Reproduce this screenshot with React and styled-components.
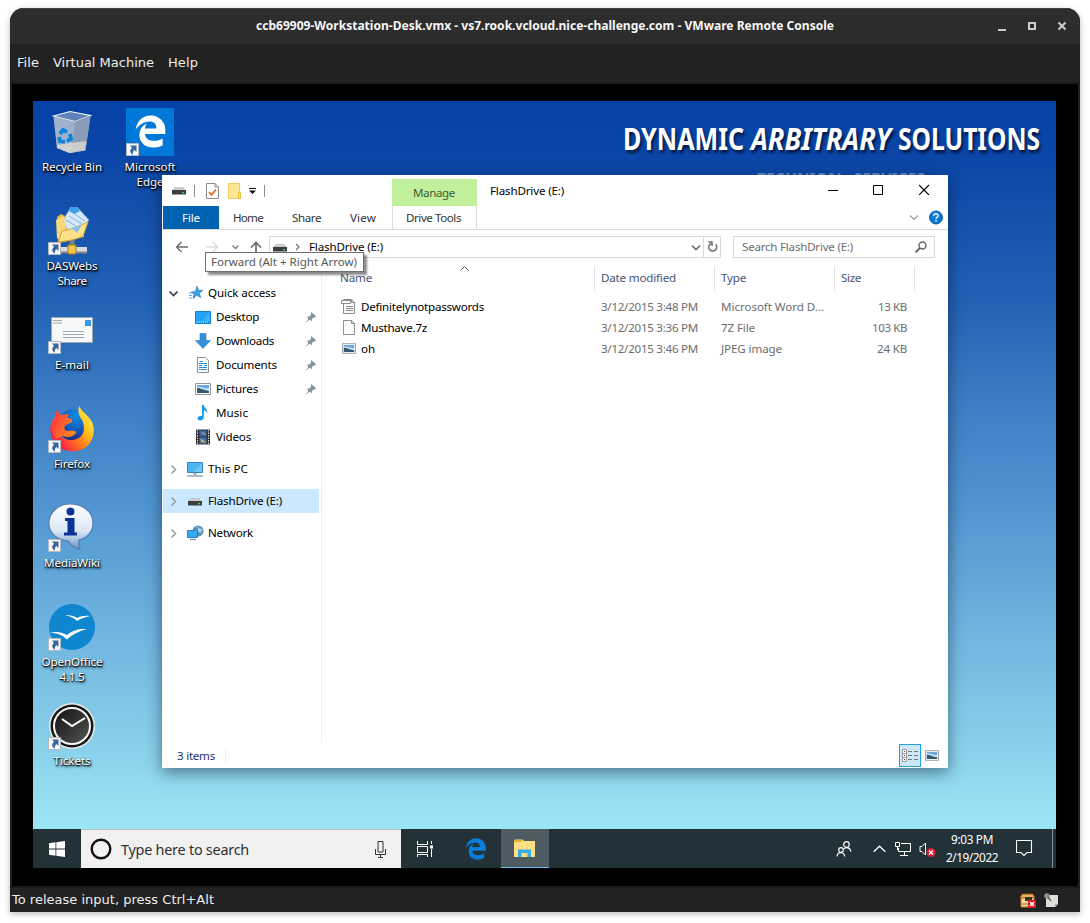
import React, { useLayoutEffect, useRef, useState } from 'react';
import styled, { createGlobalStyle, css } from 'styled-components';
import { FaEdgeLegacy } from 'react-icons/fa';

const UI = '"Noto Sans", "Open Sans", sans-serif';

const GlobalStyle = createGlobalStyle`
  * { box-sizing: border-box; }
  body { margin: 0; background: #fff; font-family: ${UI}; overflow: hidden; }
  svg { display: block; flex: none; }
`;

/* ---------- text that keeps an exact advance width ---------- */

const FitBox = styled.span`
  display: inline-block;
  flex: none;
  white-space: pre;
  text-align: left;
`;
const FitInner = styled.span`
  display: inline-block;
  transform-origin: 0 50%;
`;

function Fit({ w, squeeze, children }) {
  const ref = useRef(null);
  const [natural, setNatural] = useState(0);
  useLayoutEffect(() => {
    setNatural(ref.current.offsetWidth ? ref.current.getBoundingClientRect().width : 0);
  }, []);
  const length = ref.current ? ref.current.textContent.length : 1;
  let style;
  if (natural) {
    style = squeeze
      ? { transform: `scaleX(${w / natural})` }
      : { letterSpacing: `${(w - natural) / length}px` };
  }
  return (
    <FitBox style={{ width: w }}>
      <FitInner ref={ref} style={style}>{children}</FitInner>
    </FitBox>
  );
}

/* ---------- console window ---------- */

const Page = styled.div`
  width: 1090px;
  height: 923px;
  padding: 8px 10px 11px;
  background: #fff;
`;
const Console = styled.div`
  width: 1070px;
  height: 904px;
  display: flex;
  flex-direction: column;
  background: #222;
  border-radius: 14px 14px 0 0;
  overflow: hidden;
  box-shadow: 0 2px 6px rgba(0, 0, 0, 0.28);
`;
const TitleBar = styled.div`
  height: 36px;
  flex: none;
  display: grid;
  grid-template-columns: 1fr auto 1fr;
  align-items: center;
  background: #2d2d2d;
  border-top: 1px solid #424242;
  color: #f6f6f6;
  font: 700 13px/20px ${UI};
`;
const TitleText = styled.div`
  grid-column: 2;
  height: 24px;
`;
const TitleButtons = styled.div`
  display: flex;
  justify-content: flex-end;
  align-items: center;
  gap: 18px;
  padding: 0 12px 1px 0;
`;
const MenuBar = styled.div`
  height: 40px;
  flex: none;
  display: flex;
  gap: 14px;
  padding: 9px 7px 0;
  border-bottom: 2px solid #1b1b1b;
  color: #eee;
  font: 13px/19px "DejaVu Sans", sans-serif;
`;
const Screen = styled.div`
  height: 802px;
  flex: none;
  margin: 0 2px;
  padding: 17px 22px 18px 21px;
  background: #000;
`;
const StatusBar = styled.div`
  flex: 1;
  display: flex;
  align-items: center;
  padding: 0 21px 0 2px;
  border-top: 2px solid #1a1a1a;
  color: #eee;
  font: 13px/18px "DejaVu Sans", sans-serif;
`;
const StatusIcons = styled.div`
  display: flex;
  gap: 8px;
  margin-left: auto;
`;

/* ---------- desktop ---------- */

const Desktop = styled.div`
  position: relative;
  width: 1023px;
  height: 767px;
  display: flex;
  flex-direction: column;
  overflow: hidden;
  background: linear-gradient(180deg, #0541a6 0, #0b47a8 60px, #2162b5 200px, #3c7dc4 300px, #4f94d0 400px, #6db2de 520px, #88cfea 640px, #9be6f5 728px);
`;
const Wallpaper = styled.div`
  position: absolute;
  top: 18px;
  right: 16px;
  display: flex;
  flex-direction: column;
  align-items: flex-end;
  color: #fff;
`;
const Brand = styled.div`
  height: 40px;
  display: flex;
  gap: 7px;
  font: 700 29.5px/40px ${UI};
  text-shadow: 2px 3px 3px rgba(0, 10, 40, 0.75);
`;
const Tagline = styled.div`
  margin: 8px 115px 0 0;
  height: 22px;
  font: 700 15px/20px ${UI};
  color: #6d8fca;
`;
const IconField = styled.div`
  flex: 1;
  display: grid;
  grid-template-columns: 78px 78px;
  grid-template-rows: repeat(7, 99px);
  grid-auto-flow: column;
  padding-top: 7px;
  align-content: start;
`;
const Shortcut = styled.div`
  display: flex;
  flex-direction: column;
  align-items: center;
`;
const IconSlot = styled.div`
  position: relative;
  width: 48px;
  height: 48px;
  margin-bottom: 3px;
`;
const Badge = styled.svg`
  position: absolute;
  left: 0;
  bottom: 0;
`;
const ShortcutLabel = styled.div`
  height: 15px;
  color: #fff;
  font: 11.6px/15px ${UI};
  text-shadow: 1px 1px 2px #000, 0 1px 1px rgba(0, 0, 0, 0.8), 1px 2px 3px rgba(0, 0, 0, 0.6);
`;

/* ---------- explorer ---------- */

const Explorer = styled.div`
  position: absolute;
  left: 129px;
  top: 74px;
  width: 786px;
  height: 593px;
  display: flex;
  flex-direction: column;
  background: #fff;
  box-shadow: 0 4px 15px rgba(0, 15, 40, 0.5);
  color: #000;
  font: 11.6px/16px ${UI};
`;
const CaptionBar = styled.div`
  height: 31px;
  flex: none;
  display: flex;
`;
const QuickTools = styled.div`
  width: 230px;
  display: flex;
  align-items: center;
  gap: 8px;
  padding: 0 0 0 10px;
`;
const Bar = styled.span`
  width: 1px;
  height: 12px;
  margin-right: ${p => p.$after || 0}px;
  background: #8d8d8d;
`;
const ContextTab = styled.div`
  width: 85px;
  height: 27px;
  margin-top: 4px;
  padding-right: 1px;
  display: flex;
  align-items: center;
  justify-content: center;
  background: #c1f09c;
  color: #3f5a33;
`;
const CaptionTitle = styled.div`
  padding: 8px 0 0 13px;
`;
const CaptionButtons = styled.div`
  display: flex;
  gap: 35px;
  margin-left: auto;
  padding: 9px 18px 0 0;
`;
const Ribbon = styled.div`
  height: 24px;
  flex: none;
  display: flex;
  padding: 0 5px 0 1px;
  border-bottom: 1px solid #dadada;
`;
const RibbonTab = styled.div`
  width: ${p => p.$w}px;
  height: 23px;
  display: flex;
  align-items: center;
  justify-content: center;
  color: #333;
  ${p => p.$file && css`
    background: #0063b1;
    color: #fff;
  `}
  ${p => p.$context && css`
    margin-left: 2px;
    padding-right: 2px;
    border: solid #dedede;
    border-width: 0 1px;
  `}
`;
const RibbonEnd = styled.div`
  display: flex;
  align-items: center;
  gap: 10px;
  margin-left: auto;
`;
const AddressRow = styled.div`
  height: 36px;
  flex: none;
  display: flex;
  align-items: center;
  padding: 0 13px 2px 14px;
`;
const NavButtons = styled.div`
  width: 93px;
  display: flex;
  align-items: center;
`;
const NavSlot = styled.span`
  width: ${p => p.$w}px;
`;
const Field = styled.div`
  width: ${p => p.$w}px;
  height: 22px;
  display: flex;
  align-items: center;
  border: 1px solid #d9d9d9;
`;
const AddressField = styled(Field)`
  padding-left: 3px;
  gap: 8px;
`;
const RefreshSlot = styled.div`
  width: 17px;
  height: 20px;
  margin-left: -6px;
  padding: 4px 0 0 3px;
  border-left: 1px solid #d9d9d9;
`;
const SearchField = styled(Field)`
  margin-left: 12px;
  padding: 0 7px 0 8px;
  justify-content: space-between;
  color: #6d6d6d;
`;
const Push = styled.span`
  flex: 1;
`;
const Body = styled.div`
  flex: 1;
  display: flex;
`;
const Tree = styled.div`
  width: 160px;
  padding: 15px 2px 0 1px;
  border-right: 1px solid #f0f0f0;
`;
const TreeRow = styled.div`
  height: 24px;
  margin-bottom: ${p => (p.$gap ? 8 : 0)}px;
  display: flex;
  align-items: center;
  padding: 0 3px 0 ${p => (p.$child ? 32 : 6)}px;
  gap: ${p => (p.$child ? 5 : 0)}px;
  background: ${p => (p.$selected ? '#cce8ff' : 'transparent')};
`;
const TreeIcon = styled.span`
  width: ${p => (p.$child ? 16 : 29)}px;
  padding-left: ${p => (p.$child ? 0 : p.$inset)}px;
  margin-right: ${p => (p.$child ? 0 : 1)}px;
`;
const Chevron = styled.span`
  width: 9px;
`;
const List = styled.div`
  flex: 1;
`;
const HeaderRow = styled.div`
  height: 25px;
  display: flex;
  padding-left: 12px;
  color: #44547c;
`;
const HeaderCell = styled.div`
  position: relative;
  width: ${p => p.$w}px;
  padding: 4px 0 0 6px;
  border-right: 1px solid #e4e4e4;
`;
const SortMark = styled.svg`
  position: absolute;
  top: 0;
  right: 125px;
`;
const Files = styled.div`
  padding-top: 5px;
`;
const FileRow = styled.div`
  height: 21px;
  display: grid;
  grid-template-columns: 39px 240px 120px 126px 60px;
  align-items: center;
  color: #6d6d6d;
`;
const FileIcon = styled.span`
  padding: 0 0 1px ${p => p.$inset}px;
`;
const FileName = styled.span`
  color: #000;
`;
const SizeCell = styled.span`
  text-align: right;
`;
const ExplorerStatus = styled.div`
  height: 25px;
  flex: none;
  display: flex;
  align-items: center;
  padding: 1px 5px 0 15px;
  color: #1e3270;
`;
const StatusRule = styled.span`
  width: 1px;
  height: 12px;
  margin-left: 10px;
  background: #ececec;
`;
const ViewButton = styled.div`
  width: 22px;
  height: 23px;
  margin-bottom: 2px;
  display: flex;
  align-items: center;
  justify-content: center;
  background: ${p => (p.$active ? '#cce8f6' : 'transparent')};
  border: ${p => (p.$active ? '1px solid #26a0da' : 0)};
`;
const Tooltip = styled.div`
  position: absolute;
  left: 43px;
  top: 77px;
  width: 159px;
  height: 20px;
  padding: 1px 0 0 5px;
  border: 1px solid #6f6f6f;
  background: #fff;
  color: #575757;
  box-shadow: 3px 3px 2px rgba(0, 0, 0, 0.45);
`;

/* ---------- taskbar ---------- */

const Taskbar = styled.div`
  height: 39px;
  flex: none;
  display: flex;
  background: #223238;
  color: #fff;
`;
const TaskButton = styled.div`
  width: ${p => p.$w || 48}px;
  height: 39px;
  padding: ${p => p.$drop || 0}px 0 0 ${p => p.$nudge || 0}px;
  display: flex;
  align-items: center;
  justify-content: center;
  background: ${p => (p.$active ? '#4e5b60' : 'transparent')};
  border-bottom: ${p => (p.$active ? '1px solid #76b9ed' : 0)};
`;
const TaskSearch = styled.div`
  width: 320px;
  display: flex;
  align-items: center;
  padding: 0 14px 0 9px;
  border-top: 1px solid #bcbcc2;
  background: #f1f1f1;
  color: #303030;
  font: 14.4px/22px ${UI};
`;
const SearchHint = styled.span`
  margin: 2px auto 0 9px;
`;
const Tray = styled.div`
  display: flex;
  align-items: center;
  margin-left: auto;
`;
const Clock = styled.div`
  width: 54px;
  height: 37px;
  text-align: center;
  font: 11.8px/18px ${UI};
`;
const ShowDesktop = styled.div`
  width: 4px;
  height: 39px;
  border-left: 1px solid #859196;
`;

/* ---------- icons ---------- */

const ShortcutBadge = () => (
  <Badge width="13" height="13" viewBox="0 0 13 13">
    <path d="M.5.5h12v12H.5z" fill="#f6f7f8" stroke="#b4b9be" />
    <path d="M4 2.500h6.500V9L8.400 7C7 8.300 6.600 9.500 7 11.500 3.700 9.800 3.300 7.300 6 4.700z" fill="#3a669e" />
  </Badge>
);

const RecycleIcon = () => (
  <svg width="48" height="48" viewBox="0 0 48 48">
    <path d="M5.500 8 22 3.500 42.500 7.500l-5 35L21 45 9 40z" fill="#aab9d0" opacity=".9" />
    <path d="M5.500 8 22 3.500 42.500 7.500 27 13.500z" fill="#5d82b8" stroke="#edf1f6" strokeWidth="1.200" />
    <path d="m27 13.500 15.500-6-5 35L22 45z" fill="#8b9cb9" />
    <path d="m5.500 8 21.500 5.500L23 45 9 40z" fill="#a3b2ca" opacity=".7" />
    <path d="m9 37 14-2 15-2-1 9-15 3-13-5z" fill="#dcd9d2" opacity=".8" />
    <g fill="none" stroke="#0a84d8" strokeWidth="3.800">
      <path d="m12 26 3-4 4 2M22 26l1 5-4 2M17 34l-5-1-1-4" />
    </g>
  </svg>
);

const EdgeTile = styled.div`
  width: 48px;
  height: 48px;
  padding: 7px 0 0 8px;
  background: #0078d7;
  color: #fff;
`;

const ShareIcon = () => (
  <svg width="48" height="48" viewBox="0 0 48 48">
    <path d="M24 28v12" stroke="#7b8084" strokeWidth="5" />
    <path d="M8 43h31" stroke="#d9dcdd" strokeWidth="6" /><path d="M8 45.500h31" stroke="#81868a" strokeWidth="2" />
    <path d="M20 38h8v9h-8z" fill="#f0c64b" stroke="#a8801c" />
    <path d="M9 10l4-3 4 2 19 7v14l-24 6z" fill="#e9b93e" />
    <path d="M14 15 23 0h6l12 13-14 19z" fill="#d6e9f9" stroke="#78a9d8" strokeWidth=".8" />
    <path d="M23 0h6l3 4-6 3-5-3z" fill="#3fa0e8" />
    <path d="m18 13 13 8m-10-12 13 8M25 6l12 8" stroke="#7fb2e0" strokeWidth="1" />
    <path d="m8 13 8-4 2 15-6 10-3-3z" fill="#f6d878" />
    <path d="m10 35 4-11c8-1 17-5 26-9l-5 14c-8 4-17 5-25 6z" fill="#fbe18a" stroke="#d8a537" />
    <path d="m23 21 11-3-5 8z" fill="#8fc0e8" />
  </svg>
);

const MailIcon = () => (
  <svg width="48" height="48" viewBox="0 0 48 48">
    <path d="M3.500 11.500h41v25h-41z" fill="#f7f8f9" stroke="#a4a7aa" />
    <path d="M37 14h6v6h-6z" fill="#3a97e8" />
    <path d="M5 14.500h9M5 17h9M15 25.500h21M15 28.500h21M15 31.500h21" stroke="#a3a7ac" />
  </svg>
);

const FirefoxIcon = () => (
  <svg width="48" height="48" viewBox="0 0 48 48">
    <defs>
      <linearGradient id="ffBody" x1=".9" y1=".1" x2=".1" y2=".7">
        <stop offset="0" stopColor="#fff04a" /><stop offset=".3" stopColor="#ffc31e" />
        <stop offset=".6" stopColor="#ff7a1c" /><stop offset="1" stopColor="#fb1f45" />
      </linearGradient>
      <linearGradient id="ffHead" x1="0" y1="0" x2="1" y2=".6">
        <stop offset="0" stopColor="#ff2c45" /><stop offset="1" stopColor="#ff8a1c" />
      </linearGradient>
      <radialGradient id="ffGlobe" cx=".6" cy=".2" r=".8">
        <stop offset="0" stopColor="#0d8ee6" /><stop offset=".6" stopColor="#1459ba" /><stop offset="1" stopColor="#222a80" />
      </radialGradient>
    </defs>
    <circle cx="25" cy="20" r="15.500" fill="url(#ffGlobe)" />
    <path d="M31.500 1c1 5 9 9 12.500 16 4 9 1 19-6 25-9 7-23 5-30-3C0 31 1 18 7 12l1-6 5 5-2 18c5 8 18 8 23 1 3-5 2-10 0-15-3-4-5-9-2.500-14z" fill="url(#ffBody)" />
    <path d="M7 12l1-7 5 5c3-1 6-1 8-1l-2 4c4 0 6 1 5 4l-6 3c-2 1-2 3-1 5 3 2 5 0 9 1 2 0 3 2 1 3-3 3-7 4-12 2l-8 3C3 27 3 18 7 12z" fill="url(#ffHead)" />
  </svg>
);

const WikiIcon = () => (
  <svg width="48" height="48" viewBox="0 0 48 48">
    <defs>
      <linearGradient id="bubble" x1="0" y1="0" x2="0" y2="1">
        <stop offset="0" stopColor="#fff" /><stop offset=".6" stopColor="#dce8f7" /><stop offset="1" stopColor="#6f94c6" />
      </linearGradient>
    </defs>
    <path d="M22 0c13 0 23 8 23 19 0 9-6 15-14 17-1 4 0 6 1 9-5-1-9-4-12-8C9 36 .800 29 .800 19S10 0 22 0z" fill="url(#bubble)" stroke="#5579ae" strokeWidth="1.200" />
    <path d="M17 14h9.500v14.500h2.500v3H16v-3h3.500V17H17z" fill="#0a3594" /><circle cx="22.500" cy="7.500" r="4" fill="#0a3594" />
  </svg>
);

const OfficeIcon = () => (
  <svg width="48" height="48" viewBox="0 0 48 48">
    <circle cx="24" cy="24" r="23" fill="#0f86cf" />
    <path d="M17 12.500c5-.8 9 .4 12 2.500 4-2 8-2.500 13-2-5 1.200-9 2.500-13 5-3-3-6-4.600-12-5.500zM2 30c6-2 12-.500 17 2 6-5 12-6.500 20-6-8 2-15 5.500-20 10.500-5-4.500-9-6.500-17-6.500z" fill="#fff" />
  </svg>
);

const TicketIcon = () => (
  <svg width="48" height="48" viewBox="0 0 48 48">
    <defs>
      <linearGradient id="dial" x1="0" y1="0" x2="1" y2="1"><stop offset="0" stopColor="#111" /><stop offset="1" stopColor="#555" /></linearGradient>
    </defs>
    <circle cx="24" cy="24" r="23" fill="#e9e9e9" /><circle cx="24" cy="24" r="21.500" fill="#171717" />
    <circle cx="24" cy="24" r="18" fill="url(#dial)" stroke="#f7f7f7" strokeWidth="2" />
    <path d="m14 17 10 7 13-8" fill="none" stroke="#fff" strokeWidth="2" />
  </svg>
);

const DriveIcon = ({ w = 14 }) => (
  <svg width={w} height="9" viewBox="0 0 14 9">
    <path d="M2.500 1h9L14 4.500H0z" fill="#c9cccd" /><path d="M0 4h14v4.500H0z" fill="#3c3f41" />
    <path d="M10 6h2v1.200h-2z" fill="#36e34b" />
  </svg>
);

const PictureIcon = ({ w = 16, h = 12 }) => (
  <svg width={w} height={h} viewBox="0 0 16 12">
    <path d="M.5.5h15v11H.5z" fill="#fff" stroke="#8f959a" />
    <path d="M2 2h12v8H2z" fill="#cfe5f7" /><path d="M2 2h12v3c-4 2-7-2-12-1z" fill="#6ba7dc" />
    <path d="M2 5c4 0 6 2 12 3v2H2z" fill="#35596e" />
  </svg>
);

const PageIcon = ({ word }) => (
  <svg width="16" height="17" viewBox="0 0 16 17">
    <path d="M2.500 1.500h8l3 3v11h-11z" fill="#fbfbfb" stroke="#8e8e8e" />
    <path d="M10.500 1.500v3h3" fill="none" stroke="#8e8e8e" />
    {word && (
      <>
        <path d="M.5 2.500h9v3h-9z" fill="#fff" stroke="#8e8e8e" />
        <path d="M5 8.500h7M5 10.500h7M5 12.500h7" stroke="#8e8e8e" />
      </>
    )}
  </svg>
);

const treeIcons = {
  star: (
    <svg width="14" height="14" viewBox="0 0 14 14">
      <path d="m8 0 1.500 4.200 4.500.1-3.500 2.800 1.200 4.700-3.800-2.500L4 12.500l1-4.300-2.800-2.300 4.100-.4z" fill="#3ba0e6" stroke="#2679bd" strokeWidth=".6" />
      <path d="M0 7h3M0 9.500h3M0 12h3" stroke="#4baaf0" />
    </svg>
  ),
  desktop: (
    <svg width="16" height="13" viewBox="0 0 16 13">
      <path d="M.5.5h15v12H.5z" fill="#20a3fb" stroke="#1580d4" /><path d="M2 11h12" stroke="#d5effd" strokeDasharray="1 1" /><path d="M15 1v9L6 11z" fill="#5bbcfc" opacity=".5" />
    </svg>
  ),
  downloads: (
    <svg width="16" height="16" viewBox="0 0 16 16"><path d="M5 .5h6v7h4.500L8 15.500.500 7.500H5z" fill="#368fdb" stroke="#2b7cc4" strokeWidth=".6" /></svg>
  ),
  documents: (
    <svg width="16" height="16" viewBox="0 0 16 16">
      <path d="M2.500.5h8l3 3v12h-11z" fill="#fff" stroke="#8b9298" /><path d="M4 6.500h8M4 8.500h3m2 0h3M4 10.500h8M4 12.500h8M5 4.500h3" fill="none" stroke="#2b8bd0" />
    </svg>
  ),
  pictures: <PictureIcon />,
  music: (
    <svg width="16" height="16" viewBox="0 0 16 16">
      <path d="M7 0h1.800c.2 3 4.200 3.800 3.500 8.500-.6-2-1.500-3-3.500-3.300V12c0 2-1.400 3.500-3.500 3.500S2.500 14.500 2.500 13 4.500 10.600 7 11z" fill="#169be9" />
    </svg>
  ),
  videos: (
    <svg width="16" height="16" viewBox="0 0 16 16">
      <path d="M1 .5h14v15H1z" fill="#333" /><path d="M2.500 1v14M13.500 1v14" stroke="#eee" strokeDasharray="1.300 1.200" />
      <path d="M4.500 1.500h7v6h-7z" fill="#3566b0" /><path d="M4.500 8.500h7v6h-7z" fill="#4278bb" />
      <path d="m6 3 3 1 2 2-3-1zM5 10l3 1 3 3-4-1z" fill="#efb72f" />
    </svg>
  ),
  pc: (
    <svg width="17" height="15" viewBox="0 0 17 15">
      <path d="M.5.5h15v10H.5z" fill="#4bb7f1" stroke="#3587b9" /><path d="M15 1v9L6 10z" fill="#8bd2f7" opacity=".6" /><path d="M6 12h4M0 14h16" stroke="#93a9bb" strokeWidth="1.300" />
    </svg>
  ),
  drive: <DriveIcon />,
  network: (
    <svg width="17" height="16" viewBox="0 0 17 16">
      <circle cx="11" cy="6" r="5.500" fill="#5b91b9" /><path d="M8 2c4-1 4 2 2 4l4 2 1-4" fill="#a8d5e8" />
      <path d="M.5 5.500h10v7H.5z" fill="#33aaf1" stroke="#2980ba" /><path d="M3 14.500h6" stroke="#58809c" />
    </svg>
  ),
};

const PinIcon = () => (
  <svg width="11" height="11" viewBox="0 0 11 11">
    <path d="m6 0 5 4-1 1.500L8.500 5.500 7 7 6.500 9.500 4.500 7.500.5 11 3.500 6.500 1.500 5l3-.5L6 2.500z" fill="#86939c" />
  </svg>
);

const TreeChevron = ({ open }) => (
  <svg width="9" height="9" viewBox="0 0 9 9" fill="none" stroke={open ? '#404040' : '#a0a0a0'} strokeWidth="1.600">
    {open ? <path d="m.5 2.500 4 4 4-4" /> : <path d="m2.500.5 4 4-4 4" />}
  </svg>
);

const Line = ({ w, h, d, color, sw = 1 }) => (
  <svg width={w} height={h} viewBox={`0 0 ${w} ${h}`} fill="none" stroke={color} strokeWidth={sw}><path d={d} /></svg>
);

/* ---------- data ---------- */

const shortcuts = [
  { icon: <RecycleIcon />, lines: [['Recycle Bin', 60]], plain: true },
  { icon: <ShareIcon />, lines: [['DASWebs', 51], ['Share', 29]] },
  { icon: <MailIcon />, lines: [['E-mail', 34]] },
  { icon: <FirefoxIcon />, lines: [['Firefox', 36]] },
  { icon: <WikiIcon />, lines: [['MediaWiki', 56]] },
  { icon: <OfficeIcon />, lines: [['OpenOffice', 61], ['4.1.5', 25]] },
  { icon: <TicketIcon />, lines: [['Tickets', 37]] },
  { icon: <EdgeTile><FaEdgeLegacy size={33} /></EdgeTile>, lines: [['Microsoft', 51], ['Edge', 27]] },
];

const tree = [
  { icon: 'star', inset: 11, text: 'Quick access', w: 68, open: true },
  { icon: 'desktop', text: 'Desktop', w: 43, child: true, pin: true },
  { icon: 'downloads', text: 'Downloads', w: 58, child: true, pin: true },
  { icon: 'documents', text: 'Documents', w: 61, child: true, pin: true },
  { icon: 'pictures', text: 'Pictures', w: 42, child: true, pin: true },
  { icon: 'music', text: 'Music', w: 32, child: true },
  { icon: 'videos', text: 'Videos', w: 35, child: true, gap: true },
  { icon: 'pc', inset: 9, text: 'This PC', w: 40, gap: true },
  { icon: 'drive', inset: 10, text: 'FlashDrive (E:)', w: 74, gap: true, selected: true },
  { icon: 'network', inset: 9, text: 'Network', w: 45 },
];

const files = [
  { icon: <PageIcon word />, inset: 19, name: ['Definitelynotpasswords', 123], date: '3/12/2015 3:48 PM', type: ['Microsoft Word D...', 103], size: ['13 KB', 29] },
  { icon: <PageIcon />, inset: 19, name: ['Musthave.7z', 66], date: '3/12/2015 3:36 PM', type: ['7Z File', 34], size: ['103 KB', 35] },
  { icon: <PictureIcon w={14} h={11} />, inset: 20, name: ['oh', 14], date: '3/12/2015 3:46 PM', type: ['JPEG image', 61], size: ['24 KB', 30] },
];

/* ---------- sections ---------- */

function ExplorerWindow() {
  return (
    <Explorer>
      <CaptionBar>
        <QuickTools>
          <DriveIcon />
          <Bar $after={3} />
          <svg width="13" height="16" viewBox="0 0 13 16">
            <path d="M.5.5h8.500l3.500 3.500v11.500H.5z" fill="#fff" stroke="#8a8a8a" /><path d="M9 .5V4h3.500" fill="none" stroke="#8a8a8a" />
            <path d="m3 9 2.500 3L10 6.500" fill="none" stroke="#e8601c" strokeWidth="1.700" />
          </svg>
          <svg width="14" height="16" viewBox="-1 0 14 16">
            <path d="M.5.5h11v15H.5z" fill="#ffe694" stroke="#f0cd5b" /><path d="M10.500 9.500h2v6h-2z" fill="#ffe694" stroke="#e8bd3c" />
          </svg>
          <svg width="7" height="6" viewBox="0 0 7 6"><path d="M0 0h7v1H0zM0 2.500h7L3.500 6z" fill="#111" /></svg>
          <Bar />
        </QuickTools>
        <ContextTab><Fit w={42}>Manage</Fit></ContextTab>
        <CaptionTitle><Fit w={74}>FlashDrive (E:)</Fit></CaptionTitle>
        <CaptionButtons>
          <Line w={11} h={11} d="M1 6.500h10" color="#000" />
          <Line w={11} h={11} d="M.5 1.500h9v9h-9z" color="#000" sw={1} />
          <Line w={11} h={11} d="m0 1 10 10m0-10L0 11" color="#000" sw={1.100} />
        </CaptionButtons>
      </CaptionBar>
      <Ribbon>
        <RibbonTab $w={56} $file><Fit w={18}>File</Fit></RibbonTab>
        <RibbonTab $w={58}><Fit w={30}>Home</Fit></RibbonTab>
        <RibbonTab $w={59}><Fit w={29}>Share</Fit></RibbonTab>
        <RibbonTab $w={54}><Fit w={26}>View</Fit></RibbonTab>
        <RibbonTab $w={85} $context><Fit w={55}>Drive Tools</Fit></RibbonTab>
        <RibbonEnd>
          <Line w={10} h={6} d="m2 .5 4 4 4-4" color="#999" sw={1.200} />
          <svg width="15" height="15" viewBox="0 0 15 15">
            <circle cx="8" cy="7.500" r="6.500" fill="#0a78d6" stroke="#075a9f" />
            <path d="M5.700 5.700C5.800 3 10.300 3.100 10.200 5.700 10.100 7.200 8 7.100 8 9m0 1v1.500" fill="none" stroke="#fff" strokeWidth="1.400" />
          </svg>
        </RibbonEnd>
      </Ribbon>
      <AddressRow>
        <NavButtons>
          <NavSlot $w={29}><Line w={13} h={12} d="M12 6H.5M5.500 1l-5 5 5 5" color="#6c6c6c" sw={1.500} /></NavSlot>
          <NavSlot $w={27}><Line w={13} h={12} d="M1 6h11.500M7.500 1l5 5-5 5" color="#dcdcdc" sw={1.500} /></NavSlot>
          <NavSlot $w={18}><Line w={7} h={5} d="m.5.5 3 3 3-3" color="#858585" sw={1.400} /></NavSlot>
          <NavSlot $w={15}><Line w={12} h={12} d="M6 12V1.500M1 6.500l5-5 5 5" color="#6c6c6c" sw={1.700} /></NavSlot>
        </NavButtons>
        <AddressField $w={452}>
          <DriveIcon />
          <Line w={6} h={8} d="m1 1 3 3-3 3" color="#777" sw={1.300} />
          <Fit w={74}>FlashDrive (E:)</Fit>
          <Push />
          <Line w={10} h={7} d="m1 1.500 4 4 4-4" color="#707070" sw={1.700} />
          <RefreshSlot><Line w={11} h={12} d="M8.500 3.200a4 4 0 1 1-4.500-.7M1.500 1h3.500v4" color="#707070" sw={1.500} /></RefreshSlot>
        </AddressField>
        <SearchField $w={202}>
          <Fit w={111}>Search FlashDrive (E:)</Fit>
          <svg width="12" height="12" viewBox="0 0 12 12" fill="none" stroke="#6b6b6b" strokeWidth="1.500"><circle cx="7.500" cy="4.500" r="3.500" /><path d="M5 7 .5 11.500" strokeWidth="2" /></svg>
        </SearchField>
      </AddressRow>
      <Body>
        <Tree>
          {tree.map(row => (
            <TreeRow key={row.text} $child={row.child} $gap={row.gap} $selected={row.selected}>
              {!row.child && <Chevron><TreeChevron open={row.open} /></Chevron>}
              <TreeIcon $child={row.child} $inset={row.inset}>{treeIcons[row.icon]}</TreeIcon>
              <Fit w={row.w}>{row.text}</Fit>
              {row.pin && <><Push /><PinIcon /></>}
            </TreeRow>
          ))}
        </Tree>
        <List>
          <HeaderRow>
            <HeaderCell $w={261}>
              <Fit w={32}>Name</Fit>
              <SortMark width="9" height="5" viewBox="0 0 9 5" fill="none" stroke="#555"><path d="m.5 4.500 4-4 4 4" /></SortMark>
            </HeaderCell>
            <HeaderCell $w={120}><Fit w={75}>Date modified</Fit></HeaderCell>
            <HeaderCell $w={120}><Fit w={25}>Type</Fit></HeaderCell>
            <HeaderCell $w={80}><Fit w={20}>Size</Fit></HeaderCell>
          </HeaderRow>
          <Files>
            {files.map(f => (
              <FileRow key={f.name[0]}>
                <FileIcon $inset={f.inset}>{f.icon}</FileIcon>
                <FileName><Fit w={f.name[1]}>{f.name[0]}</Fit></FileName>
                <Fit w={97}>{f.date}</Fit>
                <Fit w={f.type[1]}>{f.type[0]}</Fit>
                <SizeCell><Fit w={f.size[1]}>{f.size[0]}</Fit></SizeCell>
              </FileRow>
            ))}
          </Files>
        </List>
      </Body>
      <ExplorerStatus>
        <Fit w={38}>3 items</Fit>
        <StatusRule />
        <Push />
        <ViewButton $active>
          <svg width="16" height="13" viewBox="0 0 16 13">
            <path d="M.5.5h4v12h-4zM.5 4.500h4M.5 8.500h4" fill="#fff" stroke="#999" /><path d="M2 2.500h1M2 6.500h1M2 10.500h1" stroke="#333" />
            <path d="M6 2.500h4m2 0h4M6 6.500h4m2 0h4M6 10.500h4m2 0h4" stroke="#777" />
          </svg>
        </ViewButton>
        <ViewButton><PictureIcon w={14} h={11} /></ViewButton>
      </ExplorerStatus>
      <Tooltip><Fit w={146}>Forward (Alt + Right Arrow)</Fit></Tooltip>
    </Explorer>
  );
}

function TaskbarStrip() {
  return (
    <Taskbar>
      <TaskButton>
        <svg width="16" height="16" viewBox="0 0 16 16" fill="#fff"><path d="M0 2.200 6.500 1.300v6.200H0zM7.300 1.200 16 0v7.500H7.300zM0 8.500h6.500v6.200L0 13.800zM7.300 8.500H16V16l-8.700-1.200z" /></svg>
      </TaskButton>
      <TaskSearch>
        <svg width="22" height="22" viewBox="0 0 22 22"><circle cx="11" cy="11" r="9.300" fill="none" stroke="#111" strokeWidth="2.400" /></svg>
        <SearchHint><Fit w={128}>Type here to search</Fit></SearchHint>
        <Line w={13} h={17} d="M4 .5h5v10.500H4zM1.500 8v5.500h10V8M6.500 13.500V16M4 16.500h5" color="#333" />
      </TaskSearch>
      <TaskButton $w={47}>
        <svg width="17" height="16" viewBox="0 0 17 16" fill="none" stroke="#fff"><path d="M1.500 0v3.500h10V0M1.500 5.500h10v6h-10zM1.500 16v-2.500h10V16M15.500 0v3M15.500 8v8" /><path d="M14 4.500h3v3h-3z" fill="#fff" stroke="none" /></svg>
      </TaskButton>
      <TaskButton $w={53} $nudge={2}><FaEdgeLegacy size={22} color="#0a7ddb" /></TaskButton>
      <TaskButton $active>
        <svg width="22" height="19" viewBox="0 0 22 19">
          <path d="M0 1.500 1 .5h7l2 1.500h11V18H0z" fill="#fde086" /><path d="M0 1h8v2H0z" fill="#e7b431" />
          <path d="M4 10.500h13V18h-3.500v-4h-6v4H4z" fill="#35aee5" />
        </svg>
      </TaskButton>
      <Tray>
        <TaskButton $w={36} $nudge={2}>
          <svg width="16" height="16" viewBox="0 0 16 16" fill="none" stroke="#fff" strokeWidth="1.200"><circle cx="10.500" cy="3.500" r="2.800" /><path d="M8 8c2-2.500 6.500-1.500 6.800 2.500" /><circle cx="5" cy="9" r="2.300" /><path d="M1 15.500c.3-5 7.200-5 7.800 0" /></svg>
        </TaskButton>
        <TaskButton $w={36} $nudge={1}><Line w={13} h={8} d="m.7 6.700 5.800-5.500 5.800 5.500" color="#fff" sw={1.300} /></TaskButton>
        <TaskButton $w={12} $nudge={1} $drop={1}>
          <svg width="17" height="15" viewBox="0 0 17 15" fill="none" stroke="#fff"><path d="M6 1.500h9.500v8H3.500V6M9.500 9.500V13M5 13.500h8M.5.5h4v4h-4zM2.500 4v4" /></svg>
        </TaskButton>
        <TaskButton $w={36} $nudge={1} $drop={1}>
          <svg width="17" height="15" viewBox="0 0 17 15"><path d="M1 4.500h2L6.500 1v12L3 9.500H1z" fill="none" stroke="#fff" /><circle cx="12" cy="10.500" r="4.500" fill="#e01f32" /><path d="m10 8.500 4 4m0-4-4 4" stroke="#fff" strokeWidth="1.300" /></svg>
        </TaskButton>
        <Clock>
          <Fit w={42}>9:03 PM</Fit>
          <Fit w={52}>2/19/2022</Fit>
        </Clock>
        <TaskButton $w={51}>
          <Line w={17} h={17} d="M.5.5h15v12H11l-3 3-3-3H.5z" color="#fff" sw={1.100} />
        </TaskButton>
        <TaskButton $w={2} />
        <ShowDesktop />
      </Tray>
    </Taskbar>
  );
}

export default function App() {
  return (
    <Page>
      <GlobalStyle />
      <Console>
        <TitleBar>
          <TitleText><Fit w={578} squeeze>ccb69909-Workstation-Desk.vmx - vs7.rook.vcloud.nice-challenge.com - VMware Remote Console</Fit></TitleText>
          <TitleButtons>
            <Line w={12} h={12} d="M2 10h8" color="#ccc" sw={2} />
            <Line w={12} h={12} d="M3 3h6v6H3z" color="#ccc" sw={2} />
            <Line w={12} h={12} d="m2.500 2.500 7 7m0-7-7 7" color="#ccc" sw={2} />
          </TitleButtons>
        </TitleBar>
        <MenuBar>
          <Fit w={22}>File</Fit>
          <Fit w={101}>Virtual Machine</Fit>
          <Fit w={30}>Help</Fit>
        </MenuBar>
        <Screen>
          <Desktop>
            <Wallpaper>
              <Brand>
                <Fit w={121} squeeze>DYNAMIC</Fit>
                <Fit w={140} squeeze><em>ARBITRARY</em></Fit>
                <Fit w={142} squeeze>SOLUTIONS</Fit>
              </Brand>
              <Tagline><Fit w={168} squeeze>TECHNICAL  SERVICES</Fit></Tagline>
            </Wallpaper>
            <IconField>
              {shortcuts.map(s => (
                <Shortcut key={s.lines[0][0]}>
                  <IconSlot>{s.icon}{!s.plain && <ShortcutBadge />}</IconSlot>
                  {s.lines.map(([text, w]) => (
                    <ShortcutLabel key={text}><Fit w={w}>{text}</Fit></ShortcutLabel>
                  ))}
                </Shortcut>
              ))}
            </IconField>
            <TaskbarStrip />
            <ExplorerWindow />
          </Desktop>
        </Screen>
        <StatusBar>
          <Fit w={202}>To release input, press Ctrl+Alt</Fit>
          <StatusIcons>
            <svg width="16" height="15" viewBox="0 0 16 15">
              <path d="M2 1h11l2 4H0z" fill="#e8b45c" stroke="#8b5310" /><path d="M1 5h13v9H1z" fill="#f4d69b" stroke="#b8781f" /><path d="M5 4h7v4H5z" fill="#333" /><path d="M2 11h6" stroke="#a06c28" />
              <path d="M8 7h8v8H8z" fill="#d31c24" /><path d="m10 9 4 4m0-4-4 4" stroke="#fff" strokeWidth="1.500" />
            </svg>
            <svg width="15" height="15" viewBox="0 0 15 15"><path d="M2 2h12v9l-3 3H2z" fill="#dedfd8" /><path d="m14 11-3 3v-3z" fill="#aaa" /><circle cx="3" cy="3" r="2.800" fill="#8f8f8f" /><path d="m4 4 3 4" stroke="#666" strokeWidth="1.500" /></svg>
          </StatusIcons>
        </StatusBar>
      </Console>
    </Page>
  );
}
